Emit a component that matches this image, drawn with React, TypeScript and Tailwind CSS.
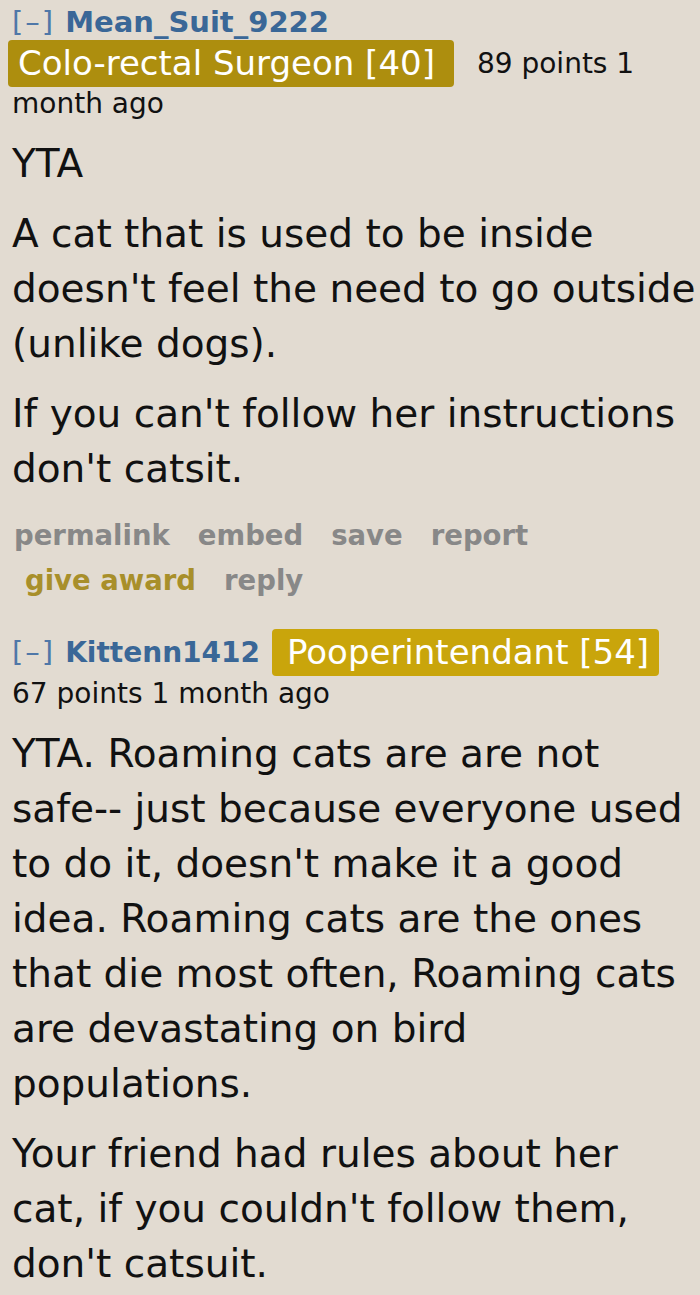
import React from 'react';

const font = { fontFamily: '"DejaVu Sans", Verdana, sans-serif' };

interface Comment {
  author: string;
  flair: string;
  flairColor: string;
  meta: string;
  paragraphs: string[];
}

const Collapse = () => (
  <span className="text-[29px] font-normal tracking-[2px] text-[#4f77a8]">[–]</span>
);

const Tagline = ({ c, first }: { c: Comment; first: boolean }) => {
  if (first) {
    return (
      <div>
        <div className="flex items-baseline pt-[4px] leading-[36px]">
          <Collapse />
          <span className="ml-[10px] text-[29px] font-bold text-[#3a6797]">{c.author}</span>
        </div>
        <div className="flex items-center">
          <span className={`-ml-[4px] rounded-[4px] pl-[10px] pr-[19px] text-[34px] leading-[47px] text-white ${c.flairColor}`}>
            {c.flair}
          </span>
          <span className="ml-[23px] text-[28px] text-[#111]">89 points 1</span>
        </div>
        <div className="text-[28px] leading-[33px] text-[#111]">month ago</div>
      </div>
    );
  }
  return (
    <div>
      <div className="flex items-center">
        <Collapse />
        <span className="ml-[10px] text-[28px] font-bold text-[#3a6797]">{c.author}</span>
        <span className={`ml-[12px] rounded-[4px] pl-[15px] pr-[10px] text-[34px] leading-[47px] text-white ${c.flairColor}`}>
          {c.flair}
        </span>
      </div>
      <div className="text-[28px] leading-[36px] text-[#111]">{c.meta}</div>
    </div>
  );
};

const Body = ({ paragraphs }: { paragraphs: string[] }) => (
  <div className="flex flex-col gap-[15px] text-[39px] leading-[55px] text-[#111]">
    {paragraphs.map((p, i) => (
      <p key={i}>{p}</p>
    ))}
  </div>
);

const Buttons = () => (
  <div className="mt-[17px] text-[27.5px] font-bold leading-[45px] text-[#888]">
    <div className="flex pl-[2px]">
      <span>permalink</span>
      <span className="ml-[28px]">embed</span>
      <span className="ml-[28px]">save</span>
      <span className="ml-[28px]">report</span>
    </div>
    <div className="flex pl-[13px]">
      <span className="text-[#a88f2a]">give award</span>
      <span className="ml-[28px]">reply</span>
    </div>
  </div>
);

export default function App() {
  const comments: Comment[] = [
    {
      author: 'Mean_Suit_9222',
      flair: 'Colo-rectal Surgeon [40]',
      flairColor: 'bg-[#ad8e0e]',
      meta: '89 points 1 month ago',
      paragraphs: [
        'YTA',
        "A cat that is used to be inside doesn't feel the need to go outside (unlike dogs).",
        "If you can't follow her instructions don't catsit.",
      ],
    },
    {
      author: 'Kittenn1412',
      flair: 'Pooperintendant [54]',
      flairColor: 'bg-[#c9a50b]',
      meta: '67 points 1 month ago',
      paragraphs: [
        "YTA. Roaming cats are are not safe-- just because everyone used to do it, doesn't make it a good idea. Roaming cats are the ones that die most often, Roaming cats are devastating on bird populations.",
        "Your friend had rules about her cat, if you couldn't follow them, don't catsuit.",
      ],
    },
  ];

  return (
    <div className="min-h-[1295px] w-[700px] overflow-hidden bg-[#e2dbd1] pl-[12px]" style={font}>
      <Tagline c={comments[0]} first />
      <div className="mt-[16px]">
        <Body paragraphs={comments[0].paragraphs} />
      </div>
      <Buttons />
      <div className="mt-[26px]">
        <Tagline c={comments[1]} first={false} />
      </div>
      <div className="mt-[14px]">
        <Body paragraphs={comments[1].paragraphs} />
      </div>
    </div>
  );
}
